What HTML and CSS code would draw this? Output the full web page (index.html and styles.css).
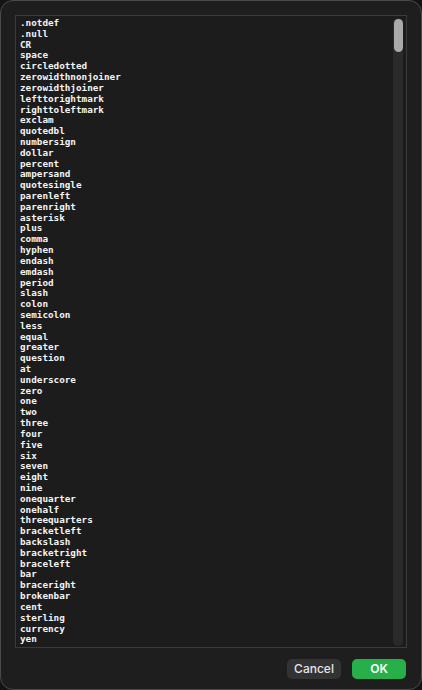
FILE: index.html
```html
<!DOCTYPE html>
<html>
<head>
<meta charset="utf-8">
<link rel="stylesheet" href="styles.css">
</head>
<body>
<div class="dialog">
  <div class="listbox">
    <ul class="glyphs">
      <li>.notdef</li><li>.null</li><li>CR</li><li>space</li><li>circledotted</li>
      <li>zerowidthnonjoiner</li><li>zerowidthjoiner</li><li>lefttorightmark</li><li>righttoleftmark</li>
      <li>exclam</li><li>quotedbl</li><li>numbersign</li><li>dollar</li><li>percent</li>
      <li>ampersand</li><li>quotesingle</li><li>parenleft</li><li>parenright</li><li>asterisk</li>
      <li>plus</li><li>comma</li><li>hyphen</li><li>endash</li><li>emdash</li><li>period</li>
      <li>slash</li><li>colon</li><li>semicolon</li><li>less</li><li>equal</li><li>greater</li>
      <li>question</li><li>at</li><li>underscore</li><li>zero</li><li>one</li><li>two</li>
      <li>three</li><li>four</li><li>five</li><li>six</li><li>seven</li><li>eight</li><li>nine</li>
      <li>onequarter</li><li>onehalf</li><li>threequarters</li><li>bracketleft</li><li>backslash</li>
      <li>bracketright</li><li>braceleft</li><li>bar</li><li>braceright</li><li>brokenbar</li>
      <li>cent</li><li>sterling</li><li>currency</li><li>yen</li><li>euro</li><li>section</li>
    </ul>
    <div class="scrollbar"><div class="thumb"></div></div>
  </div>
  <div class="actions">
    <button class="btn btn-cancel">Cancel</button>
    <button class="btn btn-ok">OK</button>
  </div>
</div>
</body>
</html>
```
FILE: styles.css
```css
html, body {
  margin: 0;
  padding: 0;
  background: #141414;
}
.dialog {
  box-sizing: border-box;
  width: 422px;
  height: 690px;
  border: 1px solid #4a4a4a;
  border-radius: 13px;
  background: #1e1e1e;
  padding: 14px 14px 10px 14px;
  display: flex;
  flex-direction: column;
}
.listbox {
  box-sizing: border-box;
  height: 633px;
  border: 1px solid #3b3b3b;
  background: #1c1c1c;
  display: flex;
  overflow: hidden;
}
.glyphs {
  flex: 1;
  list-style: none;
  margin: 0;
  padding: 2px 0 0 4px;
  overflow: hidden;
  font-family: "DejaVu Sans Mono", "Liberation Mono", monospace;
  font-size: 9.3px;
  font-weight: bold;
  line-height: 10.82px;
  color: #f4f4f4;
}
.scrollbar {
  width: 10px;
  margin: 2px 3px 1px 0;
  border-radius: 5px;
  background: #2a2a2a;
  padding: 1px 0 0 1px;
  box-sizing: border-box;
}
.thumb {
  width: 9px;
  height: 33px;
  border-radius: 4.5px;
  background: #a9a9a9;
}
.actions {
  margin-top: 11px;
  margin-right: 1px;
  display: flex;
  justify-content: flex-end;
  gap: 11px;
}
.btn {
  width: 54px;
  height: 20px;
  border: none;
  border-radius: 5px;
  font-family: Inter, "Liberation Sans", sans-serif;
  font-size: 12px;
  padding: 0;
  line-height: 20px;
}
.btn-cancel {
  background: #333333;
  color: #e6e6e6;
  font-weight: 500;
}
.btn-ok {
  background: #27b04a;
  color: #ffffff;
  font-weight: 600;
}
```
